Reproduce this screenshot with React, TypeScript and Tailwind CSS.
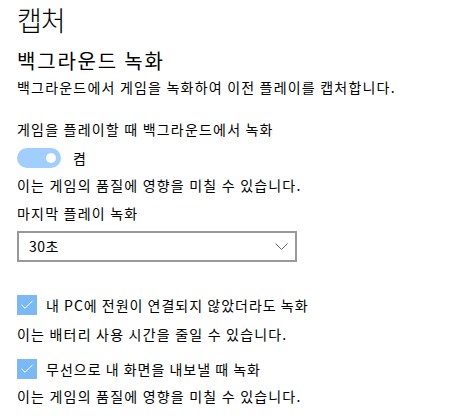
import { Check } from "lucide-react";

const font = { fontFamily: '"Noto Sans CJK KR", "Noto Sans", sans-serif' };

function CheckRow({ label }: { label: string }) {
  return (
    <div className="flex items-center h-5">
      <div className="w-5 h-5 bg-[#7ab8f6] flex items-center justify-center">
        <Check className="w-4 h-4 text-white" strokeWidth={1.5} />
      </div>
      <span className="ml-[9px] text-[14px] leading-5 text-black tracking-[1px]">{label}</span>
    </div>
  );
}

export default function App() {
  return (
    <div className="w-[449px] h-[416px] bg-white pl-[17px] overflow-hidden" style={font}>
      <h1 className="text-[27px] leading-[36px] font-light text-black pt-[2px] tracking-[-1px]">캡처</h1>
      <h2 className="text-[20px] leading-[28px] font-normal text-black mt-[9px] tracking-[1.8px]">백그라운드 녹화</h2>
      <p className="text-[14px] leading-5 text-black mt-[2px] tracking-[1.2px]">
        백그라운드에서 게임을 녹화하여 이전 플레이를 캡처합니다.
      </p>

      <p className="text-[14px] leading-5 text-black mt-[22px] tracking-[1.2px]">게임을 플레이할 때 백그라운드에서 녹화</p>
      <div className="flex items-center mt-[9px] h-5">
        <div className="w-11 h-5 rounded-full bg-[#9fceff] flex items-center justify-end pr-[5px]">
          <div className="w-[10px] h-[10px] rounded-full bg-white" />
        </div>
        <span className="ml-[12px] text-[14px] text-black">켬</span>
      </div>
      <p className="text-[14px] leading-5 text-black mt-[7px] tracking-[1.2px]">이는 게임의 품질에 영향을 미칠 수 있습니다.</p>

      <p className="text-[14px] leading-5 text-black mt-[8px] tracking-[1.2px]">마지막 플레이 녹화</p>
      <div className="w-[280px] h-[31px] border-2 border-[#999999] mt-[8px] flex items-center justify-between pl-[10px] pr-[7px]">
        <span className="text-[14px] text-black tracking-[0.5px]">30초</span>
        <svg width="13" height="8" viewBox="0 0 13 8" fill="none">
          <polyline points="0.5,0.5 6.5,6.5 12.5,0.5" stroke="#666" strokeWidth="1" />
        </svg>
      </div>

      <div className="mt-[33px]">
        <CheckRow label="내 PC에 전원이 연결되지 않았더라도 녹화" />
      </div>
      <p className="text-[14px] leading-5 text-black mt-[9px] tracking-[1.2px]">이는 배터리 사용 시간을 줄일 수 있습니다.</p>
      <div className="mt-[15px]">
        <CheckRow label="무선으로 내 화면을 내보낼 때 녹화" />
      </div>
      <p className="text-[14px] leading-5 text-black mt-[7px] tracking-[1.2px]">이는 게임의 품질에 영향을 미칠 수 있습니다.</p>
    </div>
  );
}
